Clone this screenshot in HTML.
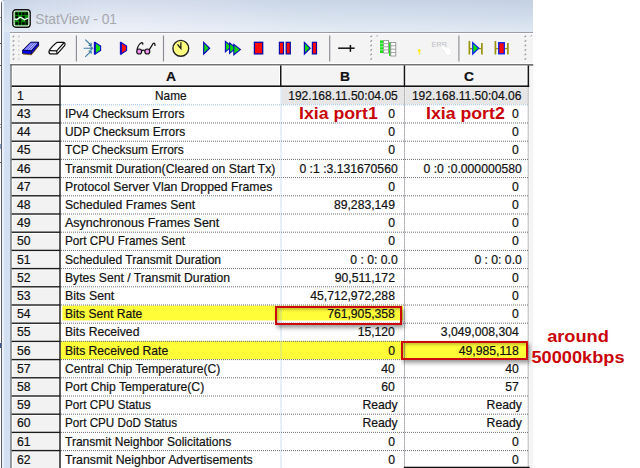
<!DOCTYPE html>
<html><head><meta charset="utf-8"><title>StatView - 01</title>
<style>
html,body{margin:0;padding:0;background:#fff;}
body{width:640px;height:468px;position:relative;overflow:hidden;font-family:"Liberation Sans",Arial,sans-serif;font-size:12.2px;color:#111;}
.abs{position:absolute;}
.t{position:absolute;white-space:nowrap;line-height:18px;height:18px;-webkit-text-stroke:0.2px #111;}
.ann{position:absolute;color:#c90509;font-weight:bold;white-space:nowrap;}
</style></head><body>

<div class="abs" style="left:1.1px;top:-0.5px;width:532.1px;height:480px;background:#d2e0f2;border-top-left-radius:4px;border-left:1px solid #5d6068;border-top:1px solid #9aa0aa;box-sizing:border-box"></div>
<div class="abs" style="left:2.1px;top:1px;width:2.2px;height:468px;background:#ebf1fa"></div>
<div class="abs" style="left:0;top:16.8px;width:1.3px;height:1px;background:#999"></div>
<div class="abs" style="left:0;top:42.6px;width:1.3px;height:1px;background:#555"></div>
<div class="abs" style="left:0;top:65px;width:1.3px;height:1px;background:#6a6a6a"></div>
<div class="abs" style="left:0;top:123.6px;width:1.3px;height:1px;background:#999"></div>
<div class="abs" style="left:0;top:126.8px;width:1.3px;height:1px;background:#aaa"></div>
<div class="abs" style="left:0;top:144px;width:1.3px;height:5px;background:#8aa0c8"></div>
<div class="abs" style="left:0;top:162px;width:1.3px;height:1px;background:#666"></div>
<div class="abs" style="left:0;top:342.5px;width:1.3px;height:5px;background:#3f5f9f"></div>
<div class="abs" style="left:4px;top:0;width:529.2px;height:32px;background:linear-gradient(180deg,rgba(20,50,110,.09) 0%,rgba(20,50,110,.03) 45%,rgba(255,255,255,.25) 100%),linear-gradient(90deg,#d6e1f0 0%,#dfe7f3 6%,#e7edf7 18%,#e5ebf6 32%,#dbe5f1 55%,#d5e0ee 100%);"></div>
<div class="abs" style="left:35.2px;top:10.9px;font-size:13.8px;line-height:18px;color:#a6a8ae;white-space:nowrap">StatView - 01</div>
<svg class="abs" style="left:12px;top:8.5px" width="19" height="19" viewBox="0 0 19 19">
<rect x="0.8" y="0.8" width="17.4" height="17.4" rx="3" fill="#fff" stroke="#111" stroke-width="1.4"/>
<rect x="2.6" y="2.6" width="13.8" height="13.8" rx="1" fill="#0a8a0a"/>
<g fill="#000"><rect x="3.4" y="3.4" width="2.5" height="2.5"/><rect x="6.800" y="3.4" width="2.500" height="2.500"/><rect x="10.200" y="3.4" width="2.500" height="2.500"/><rect x="13.400" y="3.4" width="2.500" height="2.500"/>
<rect x="3.4" y="6.800" width="2.500" height="2.500"/><rect x="10.200" y="6.800" width="2.500" height="2.500"/>
<rect x="6.800" y="10.200" width="2.500" height="2.500"/><rect x="13.400" y="10.200" width="2.500" height="2.500"/>
<rect x="3.4" y="13.200" width="2.500" height="2.500"/><rect x="6.800" y="13.200" width="2.500" height="2.500"/><rect x="10.200" y="13.200" width="2.500" height="2.500"/><rect x="13.400" y="13.200" width="2.500" height="2.500"/></g>
<path d="M2.6 10 L5 10.6 L8 8.2 L10 9 L12.500 10.800 L16.400 9" fill="none" stroke="#fff" stroke-width="1.300"/>
</svg>

<div class="abs" style="left:10px;top:31.5px;width:523.2px;height:33px;background:#f4f4f4;border-top:1.3px solid #9a9da3;box-sizing:border-box;box-shadow:inset 0 1px 0 #fcfcfc"></div>
<svg class="abs" style="left:10px;top:32px" width="524" height="33" viewBox="10 32 524 33">
<!-- grippers -->
<g stroke="#9da1a8" stroke-width="1.3">
<path d="M12.7 37.3l1.6-1.6M12.7 41.8l1.6-1.6M12.7 46.3l1.6-1.6M12.7 50.8l1.6-1.6M12.7 55.3l1.6-1.6M12.7 59.8l1.6-1.6"/>
<path d="M370.4 37.3l1.6-1.6M370.4 41.8l1.6-1.6M370.4 46.3l1.6-1.6M370.4 50.8l1.6-1.6M370.4 55.3l1.6-1.6M370.4 59.8l1.6-1.6"/>
<path d="M524.6 37.3l1.6-1.6M524.6 41.8l1.6-1.6M524.6 46.3l1.6-1.6M524.6 50.8l1.6-1.6M524.6 55.3l1.6-1.6M524.6 59.8l1.6-1.6"/>
</g>
<g stroke="#ffffff" stroke-width="0.8">
<path d="M13.9 38.0l1.2-1.2M13.9 42.5l1.2-1.2M13.9 47.0l1.2-1.2M13.9 51.5l1.2-1.2M13.9 56.0l1.2-1.2M13.9 60.5l1.2-1.2"/>
<path d="M371.6 38.0l1.2-1.2M371.6 42.5l1.2-1.2M371.6 47.0l1.2-1.2M371.6 51.5l1.2-1.2M371.6 56.0l1.2-1.2M371.6 60.5l1.2-1.2"/>
<path d="M525.8 38.0l1.2-1.2M525.8 42.5l1.2-1.2M525.8 47.0l1.2-1.2M525.8 51.5l1.2-1.2M525.8 56.0l1.2-1.2M525.8 60.5l1.2-1.2"/>
</g>
<g stroke="#b9bcc2" stroke-width="1.1">
<path d="M18.0 37.3l1.6-1.6M18.4 41.5l0.9-0.9M18.4 46.0l0.9-0.9M18.4 50.5l0.9-0.9M18.4 55.0l0.9-0.9M18.4 59.5l0.9-0.9"/>
<path d="M376.5 36.5l1.4-1.4"/>
<path d="M530.5 36.5l1.4-1.4"/>
</g>
<!-- separators -->
<g stroke="#8f9298" stroke-width="1.2">
<path d="M76.400 35.500V61.500M163.500 35.500V61.500M329.700 35.500V61.500M458.900 35.500V61.500"/>
</g>
<!-- blue eraser -->
<g stroke-linejoin="round">
<path d="M22.600 50.300L30.600 42.200H38.600L31.400 50.900Z" fill="#5c5cf4" stroke="#080850" stroke-width="1"/>
<path d="M22.600 50.300L31.400 50.900V54.300L22.600 53.500Z" fill="#0000f0" stroke="#080850" stroke-width="0.9"/>
<path d="M31.400 50.900L38.600 42.200V45.600L31.400 54.300Z" fill="#0000c8" stroke="#080850" stroke-width="0.9"/>
<path d="M26 49.600L32.200 43.300M28.300 49.800L34.500 43.400M30.600 50L36.600 43.500" stroke="#c4c4ff" stroke-width="1" fill="none"/>
<path d="M22.800 54L31.400 54.800L38.800 46" stroke="#8a5a10" stroke-width="0.8" fill="none"/>
</g>
<!-- white eraser -->
<g stroke="#111" stroke-width="1.2" fill="#fff" stroke-linejoin="round">
<path d="M49 51.500C49 50 55.500 42.600 57.500 42.400L63.500 42.300C65 42.400 65.200 43.800 64.800 45.300L57.300 53.800L50.500 53.800C49.300 53.600 48.800 52.800 49 51.500Z"/>
<path d="M49.600 50.600L56.600 50.900L63.800 43" fill="none"/>
<path d="M56.600 50.900L57 53.600" fill="none"/>
</g>
<!-- arrows + green triangle -->
<g stroke="#3d7cab" stroke-width="1.15" fill="none">
<path d="M85.300 39.600L90.800 45M88.600 45.300H91.200V42.700"/>
<path d="M83.600 48.200H92.600M90.400 46.200L92.600 48.200L90.400 50.200"/>
<path d="M85.300 56.800L90.800 51.400M88.600 51.100H91.200V53.700"/>
</g>
<path d="M95.200 42.600V53.900L100.600 50.500V46Z" fill="#0fe00f" stroke="#0a0ac4" stroke-width="1.100" stroke-linejoin="miter"/>
<path d="M94.700 41.900V54.600" stroke="#0a0ac4" stroke-width="1.700"/>
<!-- red triangle -->
<path d="M121.200 42.600V53.900L126.600 50.500V46Z" fill="#ff1010" stroke="#0a0ac4" stroke-width="1.100"/>
<path d="M120.700 41.900V54.600" stroke="#0a0ac4" stroke-width="1.700"/>
<!-- glasses -->
<g stroke="#111" stroke-width="1.2" fill="none">
<circle cx="139.200" cy="51.500" r="2.500" fill="#f090f0"/>
<circle cx="147.300" cy="51.500" r="2.500" fill="#f090f0"/>
<path d="M141.700 50.800Q143.200 49.600 144.800 50.800"/>
<path d="M137 49.600C137.500 46.500 140 42.800 141.800 42.600C142.800 42.600 143 43.600 142.600 44.800"/>
<path d="M149.300 49.600L153.200 43.400C154.200 42.400 155.200 43.600 155 46"/>
</g>
<!-- clock -->
<circle cx="180.800" cy="48.300" r="7.900" fill="#ffff82" stroke="#222" stroke-width="1.4"/>
<path d="M180.900 42.200V48.500L177.400 44.300" stroke="#111" stroke-width="1.2" fill="none"/>
<!-- play -->
<path d="M203.700 42.400V54L209.600 48.200Z" fill="#10d810" stroke="#0808c0" stroke-width="1.2"/>
<!-- triple -->
<g fill="#10d810" stroke="#0808c0" stroke-width="1.100">
<path d="M225.400 41.400V51.800L231.600 46.600Z"/>
<path d="M229.600 42.900V53.300L235.800 48.100Z"/>
<path d="M233.800 44.400V54.800L240.400 49.600Z"/>
</g>
<!-- stop -->
<rect x="254.400" y="42.300" width="8.300" height="11.600" fill="#ff0808" stroke="#0a0aa8" stroke-width="1.300"/>
<!-- pause -->
<rect x="279.400" y="42.300" width="4.100" height="11.600" fill="#ff0808" stroke="#0a0aa8" stroke-width="1.200"/>
<rect x="286.200" y="42.300" width="4.100" height="11.600" fill="#ff0808" stroke="#0a0aa8" stroke-width="1.200"/>
<!-- play+bar -->
<path d="M304.400 42.400V54L310.200 48.200Z" fill="#10d810" stroke="#0808c0" stroke-width="1.200"/>
<rect x="312.400" y="42.300" width="4.100" height="11.600" fill="#ff0808" stroke="#0a0aa8" stroke-width="1.200"/>
<!-- line with cross -->
<path d="M338.200 48.200H354.600" stroke="#111" stroke-width="1.500"/>
<path d="M350.400 45V51.800" stroke="#111" stroke-width="1.500"/>
<!-- table icon -->
<g>
<rect x="380" y="40.400" width="3.800" height="12.600" fill="#20e020"/>
<rect x="383.600" y="40.600" width="5" height="12.400" fill="#fff" stroke="#8a8a8a" stroke-width="0.8"/>
<path d="M383.600 43.700h5M383.600 46.800h5M383.600 49.900h5" stroke="#8a8a8a" stroke-width="0.8"/>
<path d="M380 43.700h3.600M380 46.800h3.600M380 49.900h3.600" stroke="#eafbea" stroke-width="0.6"/>
<rect x="389" y="42.200" width="1.800" height="13.800" fill="#20e020"/>
<rect x="390.800" y="42.400" width="5" height="13.600" fill="#fff" stroke="#8a8a8a" stroke-width="0.800"/>
<path d="M390.800 45.800h5M390.800 49.200h5M390.800 52.600h5" stroke="#8a8a8a" stroke-width="0.800"/>
</g>
<!-- yellow arrow -->
<path d="M419.300 54.800V50.500M418.300 51.100L419.300 49.300L420.300 51.100Z" stroke="#ffe800" stroke-width="1" fill="#ffe800"/>
<!-- ERR + hand -->
<text x="431.600" y="46.600" font-family="Liberation Sans, sans-serif" font-size="8" fill="#bcbec3" textLength="15.500" lengthAdjust="spacingAndGlyphs">ERR</text>
<path d="M440.500 46.500L444.500 51.500C445 54.500 447 56 449.300 55.600C451.600 54.800 452 52 451 49.800L448 46.800L445.800 48L443 45.600Z" fill="#fff" stroke="#ebebeb" stroke-width="0.7"/>
<!-- play between bars -->
<g stroke="#9a9410" stroke-width="1.700" fill="none">
<path d="M469.400 41V54.400M481.900 43V54.400"/>
<path d="M495.400 41V54.400M507.900 43V54.400"/>
</g>
<g stroke="#9a9410" stroke-width="1.300" fill="none">
<path d="M469.400 48.600H472.500M478.500 48.600H481.900M495.400 48.600H498.200M504.700 48.600H507.900"/>
</g>
<path d="M472.700 42.600V54L478.800 48.300Z" fill="#10e010" stroke="#0a20f0" stroke-width="1.200"/>
<rect x="498.700" y="42.700" width="5.600" height="11.100" fill="#ff0808" stroke="#0a20f0" stroke-width="1.300"/>
</svg>

<svg class="abs" style="left:0;top:0" width="640" height="468" viewBox="0 0 640 468">
<rect x="11" y="65" width="522.2" height="404" fill="#fff"/>
<rect x="529.2" y="66" width="4" height="403" fill="#f5f5f5"/>
<rect x="10.4" y="62.9" width="522.8" height="1.3" fill="#fdfdfd"/>
<rect x="10.4" y="64.1" width="522.8" height="1.6" fill="#646464"/>
<rect x="10.4" y="64.1" width="1.4" height="404" fill="#686868"/>
<rect x="11.8" y="65.6" width="47.599999999999994" height="20" fill="#fff"/>
<rect x="13.0" y="66.8" width="45.39999999999999" height="17.9" fill="#f4f4f4"/>
<rect x="60.8" y="65.6" width="219.2" height="20" fill="#fff"/>
<rect x="62.0" y="66.8" width="217.0" height="17.9" fill="#f4f4f4"/>
<rect x="281.4" y="65.6" width="122.40000000000003" height="20" fill="#fff"/>
<rect x="282.59999999999997" y="66.8" width="120.20000000000003" height="17.9" fill="#f4f4f4"/>
<rect x="405.2" y="65.6" width="122.50000000000006" height="20" fill="#fff"/>
<rect x="406.4" y="66.8" width="120.30000000000005" height="17.9" fill="#f4f4f4"/>
<rect x="11.8" y="87.30" width="47.6" height="16.80" fill="#fff"/>
<rect x="12.8" y="88.30" width="46.6" height="15.80" fill="#f2f2f2"/>
<rect x="11.8" y="105.50" width="47.6" height="16.80" fill="#fff"/>
<rect x="12.8" y="106.50" width="46.6" height="15.80" fill="#f2f2f2"/>
<rect x="11.8" y="123.70" width="47.6" height="16.80" fill="#fff"/>
<rect x="12.8" y="124.70" width="46.6" height="15.80" fill="#f2f2f2"/>
<rect x="11.8" y="141.90" width="47.6" height="16.80" fill="#fff"/>
<rect x="12.8" y="142.90" width="46.6" height="15.80" fill="#f2f2f2"/>
<rect x="11.8" y="160.10" width="47.6" height="16.80" fill="#fff"/>
<rect x="12.8" y="161.10" width="46.6" height="15.80" fill="#f2f2f2"/>
<rect x="11.8" y="178.30" width="47.6" height="16.80" fill="#fff"/>
<rect x="12.8" y="179.30" width="46.6" height="15.80" fill="#f2f2f2"/>
<rect x="11.8" y="196.50" width="47.6" height="16.80" fill="#fff"/>
<rect x="12.8" y="197.50" width="46.6" height="15.80" fill="#f2f2f2"/>
<rect x="11.8" y="214.70" width="47.6" height="16.80" fill="#fff"/>
<rect x="12.8" y="215.70" width="46.6" height="15.80" fill="#f2f2f2"/>
<rect x="11.8" y="232.90" width="47.6" height="16.80" fill="#fff"/>
<rect x="12.8" y="233.90" width="46.6" height="15.80" fill="#f2f2f2"/>
<rect x="11.8" y="251.10" width="47.6" height="16.80" fill="#fff"/>
<rect x="12.8" y="252.10" width="46.6" height="15.80" fill="#f2f2f2"/>
<rect x="11.8" y="269.30" width="47.6" height="16.80" fill="#fff"/>
<rect x="12.8" y="270.30" width="46.6" height="15.80" fill="#f2f2f2"/>
<rect x="11.8" y="287.50" width="47.6" height="16.80" fill="#fff"/>
<rect x="12.8" y="288.50" width="46.6" height="15.80" fill="#f2f2f2"/>
<rect x="11.8" y="305.70" width="47.6" height="16.80" fill="#fff"/>
<rect x="12.8" y="306.70" width="46.6" height="15.80" fill="#f2f2f2"/>
<rect x="11.8" y="323.90" width="47.6" height="16.80" fill="#fff"/>
<rect x="12.8" y="324.90" width="46.6" height="15.80" fill="#f2f2f2"/>
<rect x="11.8" y="342.10" width="47.6" height="16.80" fill="#fff"/>
<rect x="12.8" y="343.10" width="46.6" height="15.80" fill="#f2f2f2"/>
<rect x="11.8" y="360.30" width="47.6" height="16.80" fill="#fff"/>
<rect x="12.8" y="361.30" width="46.6" height="15.80" fill="#f2f2f2"/>
<rect x="11.8" y="378.50" width="47.6" height="16.80" fill="#fff"/>
<rect x="12.8" y="379.50" width="46.6" height="15.80" fill="#f2f2f2"/>
<rect x="11.8" y="396.70" width="47.6" height="16.80" fill="#fff"/>
<rect x="12.8" y="397.70" width="46.6" height="15.80" fill="#f2f2f2"/>
<rect x="11.8" y="414.90" width="47.6" height="16.80" fill="#fff"/>
<rect x="12.8" y="415.90" width="46.6" height="15.80" fill="#f2f2f2"/>
<rect x="11.8" y="433.10" width="47.6" height="16.80" fill="#fff"/>
<rect x="12.8" y="434.10" width="46.6" height="15.80" fill="#f2f2f2"/>
<rect x="11.8" y="451.30" width="47.6" height="16.80" fill="#fff"/>
<rect x="12.8" y="452.30" width="46.6" height="15.80" fill="#f2f2f2"/>
<rect x="11.8" y="469.50" width="47.6" height="16.80" fill="#fff"/>
<rect x="12.8" y="470.50" width="46.6" height="15.80" fill="#f2f2f2"/>
<rect x="281.7" y="87.20" width="122.2" height="17.20" fill="#e6e6e7"/>
<rect x="405.3" y="87.20" width="122.4" height="17.20" fill="#e6e6e7"/>
<rect x="62.4" y="305.6" width="340.7" height="14.8" fill="#fffd38"/>
<rect x="60.6" y="341" width="467.4" height="18.3" fill="#fffd38"/>
<path d="M61 104.80H528.6" stroke="#9fbfe6" stroke-width="1" stroke-dasharray="1 1" fill="none"/>
<path d="M61 123.00H528.6" stroke="#6e6e78" stroke-width="1" stroke-dasharray="1 1" fill="none"/>
<path d="M61 141.20H528.6" stroke="#6e6e78" stroke-width="1" stroke-dasharray="1 1" fill="none"/>
<path d="M61 159.40H528.6" stroke="#6e6e78" stroke-width="1" stroke-dasharray="1 1" fill="none"/>
<path d="M61 177.60H528.6" stroke="#6e6e78" stroke-width="1" stroke-dasharray="1 1" fill="none"/>
<path d="M61 195.80H528.6" stroke="#6e6e78" stroke-width="1" stroke-dasharray="1 1" fill="none"/>
<path d="M61 214.00H528.6" stroke="#6e6e78" stroke-width="1" stroke-dasharray="1 1" fill="none"/>
<path d="M61 232.20H528.6" stroke="#6e6e78" stroke-width="1" stroke-dasharray="1 1" fill="none"/>
<path d="M61 250.40H528.6" stroke="#6e6e78" stroke-width="1" stroke-dasharray="1 1" fill="none"/>
<path d="M61 268.60H528.6" stroke="#6e6e78" stroke-width="1" stroke-dasharray="1 1" fill="none"/>
<path d="M61 286.80H528.6" stroke="#6e6e78" stroke-width="1" stroke-dasharray="1 1" fill="none"/>
<path d="M61 305.00H528.6" stroke="#6e6e78" stroke-width="1" stroke-dasharray="1 1" fill="none"/>
<path d="M61 323.20H528.6" stroke="#6e6e78" stroke-width="1" stroke-dasharray="1 1" fill="none"/>
<path d="M61 341.40H528.6" stroke="#6e6e78" stroke-width="1" stroke-dasharray="1 1" fill="none"/>
<path d="M61 359.60H528.6" stroke="#6e6e78" stroke-width="1" stroke-dasharray="1 1" fill="none"/>
<path d="M61 377.80H528.6" stroke="#6e6e78" stroke-width="1" stroke-dasharray="1 1" fill="none"/>
<path d="M61 396.00H528.6" stroke="#6e6e78" stroke-width="1" stroke-dasharray="1 1" fill="none"/>
<path d="M61 414.20H528.6" stroke="#6e6e78" stroke-width="1" stroke-dasharray="1 1" fill="none"/>
<path d="M61 432.40H528.6" stroke="#6e6e78" stroke-width="1" stroke-dasharray="1 1" fill="none"/>
<path d="M61 450.60H528.6" stroke="#6e6e78" stroke-width="1" stroke-dasharray="1 1" fill="none"/>
<path d="M61 468.80H528.6" stroke="#6e6e78" stroke-width="1" stroke-dasharray="1 1" fill="none"/>
<path d="M281 87.4V468" stroke="#9fbfe6" stroke-width="1" stroke-dasharray="1 1" fill="none"/>
<path d="M404.5 87.4V468" stroke="#6e6e78" stroke-width="1" stroke-dasharray="1 1" fill="none"/>
<path d="M528.2 87.4V468" stroke="#6e6e78" stroke-width="1" stroke-dasharray="1 1" fill="none"/>
<rect x="11.8" y="104.10" width="48.4" height="1.4" fill="#1c1c1c"/>
<rect x="11.8" y="122.30" width="48.4" height="1.4" fill="#1c1c1c"/>
<rect x="11.8" y="140.50" width="48.4" height="1.4" fill="#1c1c1c"/>
<rect x="11.8" y="158.70" width="48.4" height="1.4" fill="#1c1c1c"/>
<rect x="11.8" y="176.90" width="48.4" height="1.4" fill="#1c1c1c"/>
<rect x="11.8" y="195.10" width="48.4" height="1.4" fill="#1c1c1c"/>
<rect x="11.8" y="213.30" width="48.4" height="1.4" fill="#1c1c1c"/>
<rect x="11.8" y="231.50" width="48.4" height="1.4" fill="#1c1c1c"/>
<rect x="11.8" y="249.70" width="48.4" height="1.4" fill="#1c1c1c"/>
<rect x="11.8" y="267.90" width="48.4" height="1.4" fill="#1c1c1c"/>
<rect x="11.8" y="286.10" width="48.4" height="1.4" fill="#1c1c1c"/>
<rect x="11.8" y="304.30" width="48.4" height="1.4" fill="#1c1c1c"/>
<rect x="11.8" y="322.50" width="48.4" height="1.4" fill="#1c1c1c"/>
<rect x="11.8" y="340.70" width="48.4" height="1.4" fill="#1c1c1c"/>
<rect x="11.8" y="358.90" width="48.4" height="1.4" fill="#1c1c1c"/>
<rect x="11.8" y="377.10" width="48.4" height="1.4" fill="#1c1c1c"/>
<rect x="11.8" y="395.30" width="48.4" height="1.4" fill="#1c1c1c"/>
<rect x="11.8" y="413.50" width="48.4" height="1.4" fill="#1c1c1c"/>
<rect x="11.8" y="431.70" width="48.4" height="1.4" fill="#1c1c1c"/>
<rect x="11.8" y="449.90" width="48.4" height="1.4" fill="#1c1c1c"/>
<rect x="11.8" y="468.10" width="48.4" height="1.4" fill="#1c1c1c"/>
<rect x="11.8" y="85.4" width="517.4" height="1.6" fill="#151515"/>
<rect x="280" y="65.6" width="1.5" height="21.4" fill="#151515"/>
<rect x="403.7" y="65.6" width="1.5" height="21.4" fill="#151515"/>
<rect x="527.6" y="65.6" width="1.5" height="21.4" fill="#151515"/>
<rect x="59.3" y="65.6" width="1.4" height="403" fill="#151515"/>
<rect x="403.8" y="466.7" width="125.8" height="1.5" fill="#111"/>
</svg>
<div class="t" style="left:151.2px;top:67.6px;width:40px;text-align:center;font-weight:bold;font-size:13.2px;transform:scaleX(1.05)">A</div>
<div class="t" style="left:325px;top:67.6px;width:40px;text-align:center;font-weight:bold;font-size:13.2px;transform:scaleX(1.05)">B</div>
<div class="t" style="left:448.7px;top:67.6px;width:40px;text-align:center;font-weight:bold;font-size:13.2px;transform:scaleX(1.05)">C</div>
<div class="t" style="left:17px;top:86.75px">1</div>
<div class="t" style="left:61px;width:219.6px;text-align:center;top:86.75px;transform:scaleX(.97)">Name</div>
<div class="t" style="left:281px;width:124px;text-align:center;top:86.75px;transform:scaleX(.988)">192.168.11.50:04.05</div>
<div class="t" style="left:405px;width:123.4px;text-align:center;top:86.75px;transform:scaleX(.988)">192.168.11.50:04.06</div>
<div class="t" style="left:17px;top:104.95px">43</div>
<div class="t" style="left:65px;top:104.95px;transform:scaleX(0.9794);transform-origin:0 0">IPv4 Checksum Errors</div>
<div class="t" style="right:245.1px;top:104.95px">0</div>
<div class="t" style="right:121.2px;top:104.95px">0</div>
<div class="t" style="left:17px;top:123.15px">44</div>
<div class="t" style="left:65px;top:123.15px;transform:scaleX(0.9762);transform-origin:0 0">UDP Checksum Errors</div>
<div class="t" style="right:245.1px;top:123.15px">0</div>
<div class="t" style="right:121.2px;top:123.15px">0</div>
<div class="t" style="left:17px;top:141.35px">45</div>
<div class="t" style="left:65px;top:141.35px;transform:scaleX(0.9754);transform-origin:0 0">TCP Checksum Errors</div>
<div class="t" style="right:245.1px;top:141.35px">0</div>
<div class="t" style="right:121.2px;top:141.35px">0</div>
<div class="t" style="left:17px;top:159.55px">46</div>
<div class="t" style="left:65px;top:159.55px;transform:scaleX(1.0021);transform-origin:0 0">Transmit Duration(Cleared on Start Tx)</div>
<div class="t" style="right:242.3px;top:159.55px">0 :1 :3.131670560</div>
<div class="t" style="right:118.2px;top:159.55px">0 :0 :0.000000580</div>
<div class="t" style="left:17px;top:177.75px">47</div>
<div class="t" style="left:65px;top:177.75px;transform:scaleX(1.0043);transform-origin:0 0">Protocol Server Vlan Dropped Frames</div>
<div class="t" style="right:245.1px;top:177.75px">0</div>
<div class="t" style="right:121.2px;top:177.75px">0</div>
<div class="t" style="left:17px;top:195.95px">48</div>
<div class="t" style="left:65px;top:195.95px;transform:scaleX(0.9958);transform-origin:0 0">Scheduled Frames Sent</div>
<div class="t" style="right:245.1px;top:195.95px">89,283,149</div>
<div class="t" style="right:121.2px;top:195.95px">0</div>
<div class="t" style="left:17px;top:214.15px">49</div>
<div class="t" style="left:65px;top:214.15px;transform:scaleX(1.026);transform-origin:0 0">Asynchronous Frames Sent</div>
<div class="t" style="right:245.1px;top:214.15px">0</div>
<div class="t" style="right:121.2px;top:214.15px">0</div>
<div class="t" style="left:17px;top:232.35px">50</div>
<div class="t" style="left:65px;top:232.35px;transform:scaleX(0.9637);transform-origin:0 0">Port CPU Frames Sent</div>
<div class="t" style="right:245.1px;top:232.35px">0</div>
<div class="t" style="right:121.2px;top:232.35px">0</div>
<div class="t" style="left:17px;top:250.55px">51</div>
<div class="t" style="left:65px;top:250.55px;transform:scaleX(0.9932);transform-origin:0 0">Scheduled Transmit Duration</div>
<div class="t" style="right:242.3px;top:250.55px">0 : 0: 0.0</div>
<div class="t" style="right:118.2px;top:250.55px">0 : 0: 0.0</div>
<div class="t" style="left:17px;top:268.75px">52</div>
<div class="t" style="left:65px;top:268.75px;transform:scaleX(0.9989);transform-origin:0 0">Bytes Sent / Transmit Duration</div>
<div class="t" style="right:245.1px;top:268.75px">90,511,172</div>
<div class="t" style="right:121.2px;top:268.75px">0</div>
<div class="t" style="left:17px;top:286.95px">53</div>
<div class="t" style="left:65px;top:286.95px;transform:scaleX(1.0106);transform-origin:0 0">Bits Sent</div>
<div class="t" style="right:245.1px;top:286.95px">45,712,972,288</div>
<div class="t" style="right:121.2px;top:286.95px">0</div>
<div class="t" style="left:17px;top:305.15px">54</div>
<div class="t" style="left:65px;top:305.15px;transform:scaleX(0.9922);transform-origin:0 0">Bits Sent Rate</div>
<div class="t" style="right:245.1px;top:305.15px">761,905,358</div>
<div class="t" style="right:121.2px;top:305.15px">0</div>
<div class="t" style="left:17px;top:323.35px">55</div>
<div class="t" style="left:65px;top:323.35px;transform:scaleX(0.9984);transform-origin:0 0">Bits Received</div>
<div class="t" style="right:245.1px;top:323.35px">15,120</div>
<div class="t" style="right:121.2px;top:323.35px">3,049,008,304</div>
<div class="t" style="left:17px;top:341.55px">56</div>
<div class="t" style="left:65px;top:341.55px;transform:scaleX(0.9956);transform-origin:0 0">Bits Received Rate</div>
<div class="t" style="right:245.1px;top:341.55px">0</div>
<div class="t" style="right:121.2px;top:341.55px">49,985,118</div>
<div class="t" style="left:17px;top:359.75px">57</div>
<div class="t" style="left:65px;top:359.75px;transform:scaleX(0.9939);transform-origin:0 0">Central Chip Temperature(C)</div>
<div class="t" style="right:245.1px;top:359.75px">40</div>
<div class="t" style="right:121.2px;top:359.75px">40</div>
<div class="t" style="left:17px;top:377.95px">58</div>
<div class="t" style="left:65px;top:377.95px;transform:scaleX(0.9992);transform-origin:0 0">Port Chip Temperature(C)</div>
<div class="t" style="right:245.1px;top:377.95px">60</div>
<div class="t" style="right:121.2px;top:377.95px">57</div>
<div class="t" style="left:17px;top:396.15px">59</div>
<div class="t" style="left:65px;top:396.15px;transform:scaleX(0.9606);transform-origin:0 0">Port CPU Status</div>
<div class="t" style="right:242.3px;top:396.15px">Ready</div>
<div class="t" style="right:118.2px;top:396.15px">Ready</div>
<div class="t" style="left:17px;top:414.35px">60</div>
<div class="t" style="left:65px;top:414.35px;transform:scaleX(0.9574);transform-origin:0 0">Port CPU DoD Status</div>
<div class="t" style="right:242.3px;top:414.35px">Ready</div>
<div class="t" style="right:118.2px;top:414.35px">Ready</div>
<div class="t" style="left:17px;top:432.55px">61</div>
<div class="t" style="left:65px;top:432.55px;transform:scaleX(0.988);transform-origin:0 0">Transmit Neighbor Solicitations</div>
<div class="t" style="right:245.1px;top:432.55px">0</div>
<div class="t" style="right:121.2px;top:432.55px">0</div>
<div class="t" style="left:17px;top:450.75px">62</div>
<div class="t" style="left:65px;top:450.75px;transform:scaleX(1.0064);transform-origin:0 0">Transmit Neighbor Advertisements</div>
<div class="t" style="right:245.1px;top:450.75px">0</div>
<div class="t" style="right:121.2px;top:450.75px">0</div>
<div class="abs" style="left:274.6px;top:305.9px;width:127.4px;height:18.8px;border:2.2px solid #cc0a0e;box-sizing:border-box;box-shadow:2px 3px 4px rgba(0,0,0,.38), inset 2px 2px 3px rgba(0,0,0,.22)"></div>
<div class="abs" style="left:400.8px;top:340.8px;width:127.3px;height:19.2px;border:2.2px solid #cc0a0e;box-sizing:border-box;box-shadow:2px 3px 4px rgba(0,0,0,.38), inset 2px 2px 3px rgba(0,0,0,.22)"></div>
<div class="ann" style="left:298.9px;top:102.6px;font-size:16.3px;line-height:20px;transform:scaleX(1.088);transform-origin:0 0">Ixia port1</div>
<div class="ann" style="left:426.4px;top:102.6px;font-size:16.3px;line-height:20px;transform:scaleX(1.088);transform-origin:0 0">Ixia port2</div>
<div class="ann" style="left:528.2px;width:100px;text-align:center;top:326.2px;font-size:16.4px;line-height:20.7px;transform:scaleX(1.11);transform-origin:50px 0">around<br>50000kbps</div>
</body></html>
